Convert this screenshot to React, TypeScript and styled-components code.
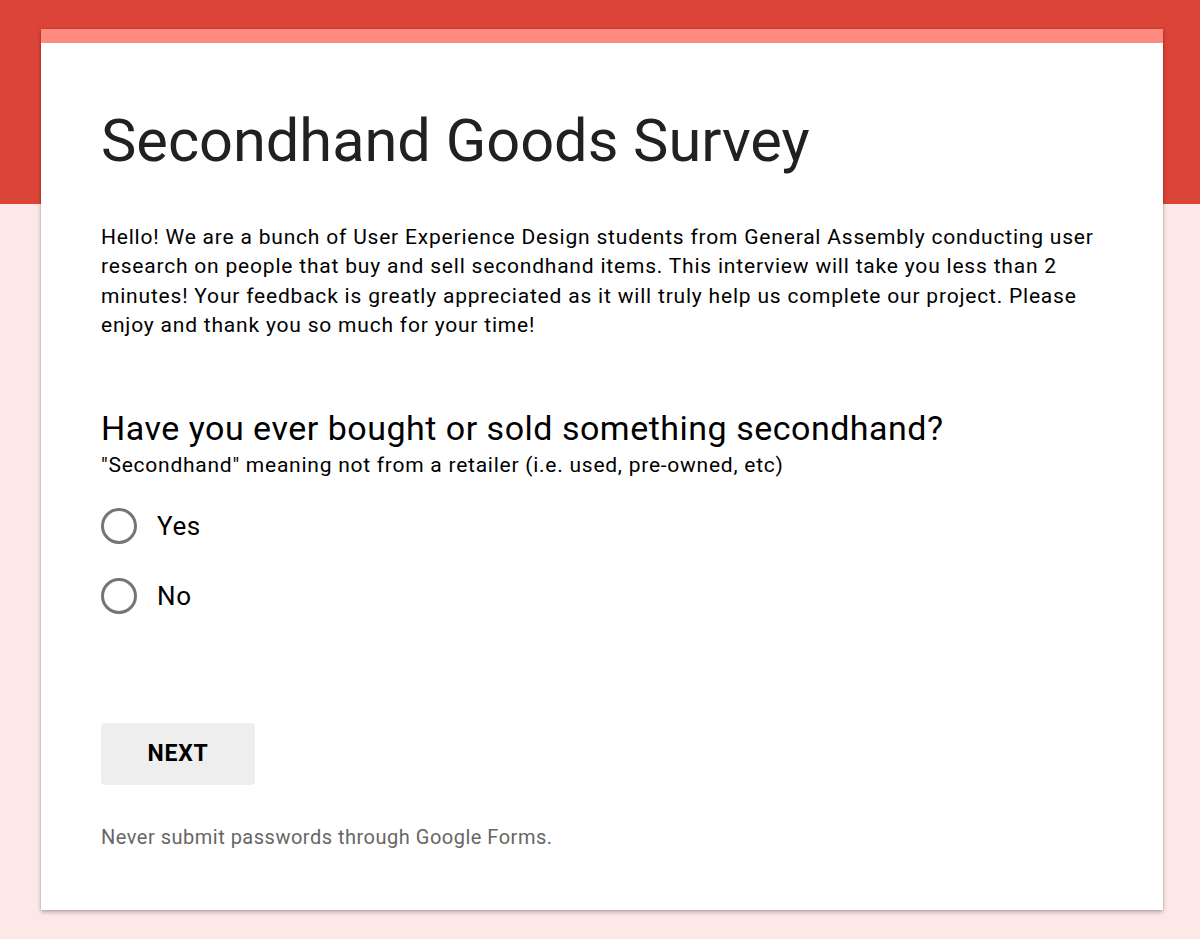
import React from "react";
import styled, { createGlobalStyle } from "styled-components";

const Global = createGlobalStyle`
  html, body { margin: 0; padding: 0; }
  body {
    background: #fce8e6;
    font-family: Roboto, "Noto Sans", Arial, sans-serif;
    color: #212121;
  }
`;

const Page = styled.div`
  min-height: 939px;
  background: linear-gradient(to bottom, #db4437 0, #db4437 204px, #fce8e6 204px);
  padding-top: 29px;
  box-sizing: border-box;
`;

const Card = styled.main`
  width: 1122px;
  margin-left: 41px;
  background: #fff;
  border-top: 14px solid #ff8a80;
  box-shadow: 0 2px 4px rgba(0, 0, 0, 0.28), 0 0 2px rgba(0, 0, 0, 0.12);
  padding: 0 60px 60px 60px;
  box-sizing: border-box;
  height: 881px;
`;

const Title = styled.h1`
  margin: 0;
  padding-top: 58px;
  font-size: 59.5px;
  font-weight: 400;
  line-height: 80px;
  color: #212121;
`;

const Description = styled.p`
  margin: 42px 0 0 0;
  font-size: 21px;
  line-height: 29.4px;
  letter-spacing: 0.8px;
  color: #000;
`;

const Question = styled.h2`
  margin: 67px 0 0 0;
  font-size: 34px;
  font-weight: 400;
  line-height: 40px;
  letter-spacing: 0.5px;
  color: #000;
`;

const Help = styled.div`
  margin-top: 4px;
  font-size: 21px;
  line-height: 26px;
  letter-spacing: 0.75px;
  color: #000;
`;

const Options = styled.div`
  display: flex;
  flex-direction: column;
  gap: 34px;
  margin-top: 30px;
`;

const Option = styled.label`
  display: flex;
  align-items: center;
  gap: 20px;
  font-size: 26px;
  letter-spacing: 0.6px;
  color: #000;
  cursor: pointer;
`;

const Circle = styled.span`
  width: 36px;
  height: 36px;
  border-radius: 50%;
  border: 3px solid #757575;
  box-sizing: border-box;
  flex: none;
`;

const NextButton = styled.button`
  margin-top: 109px;
  width: 154px;
  height: 62px;
  background: #eeeeee;
  border: none;
  border-radius: 4px;
  font-family: Roboto, Arial, sans-serif;
  font-weight: 700;
  font-size: 23px;
  color: #000;
  letter-spacing: 0.8px;
  display: block;
`;

const Footer = styled.div`
  margin-top: 40px;
  font-size: 20px;
  letter-spacing: 0.5px;
  color: #666;
`;

export default function App() {
  return (
    <>
      <Global />
      <Page>
        <Card>
          <Title>Secondhand Goods Survey</Title>
          <Description>
            Hello! We are a bunch of User Experience Design students from General Assembly conducting user
            research on people that buy and sell secondhand items. This interview will take you less than 2
            minutes! Your feedback is greatly appreciated as it will truly help us complete our project. Please
            enjoy and thank you so much for your time!
          </Description>
          <Question>Have you ever bought or sold something secondhand?</Question>
          <Help>"Secondhand" meaning not from a retailer (i.e. used, pre-owned, etc)</Help>
          <Options>
            <Option>
              <Circle />
              Yes
            </Option>
            <Option>
              <Circle />
              No
            </Option>
          </Options>
          <NextButton>NEXT</NextButton>
          <Footer>Never submit passwords through Google Forms.</Footer>
        </Card>
      </Page>
    </>
  );
}
